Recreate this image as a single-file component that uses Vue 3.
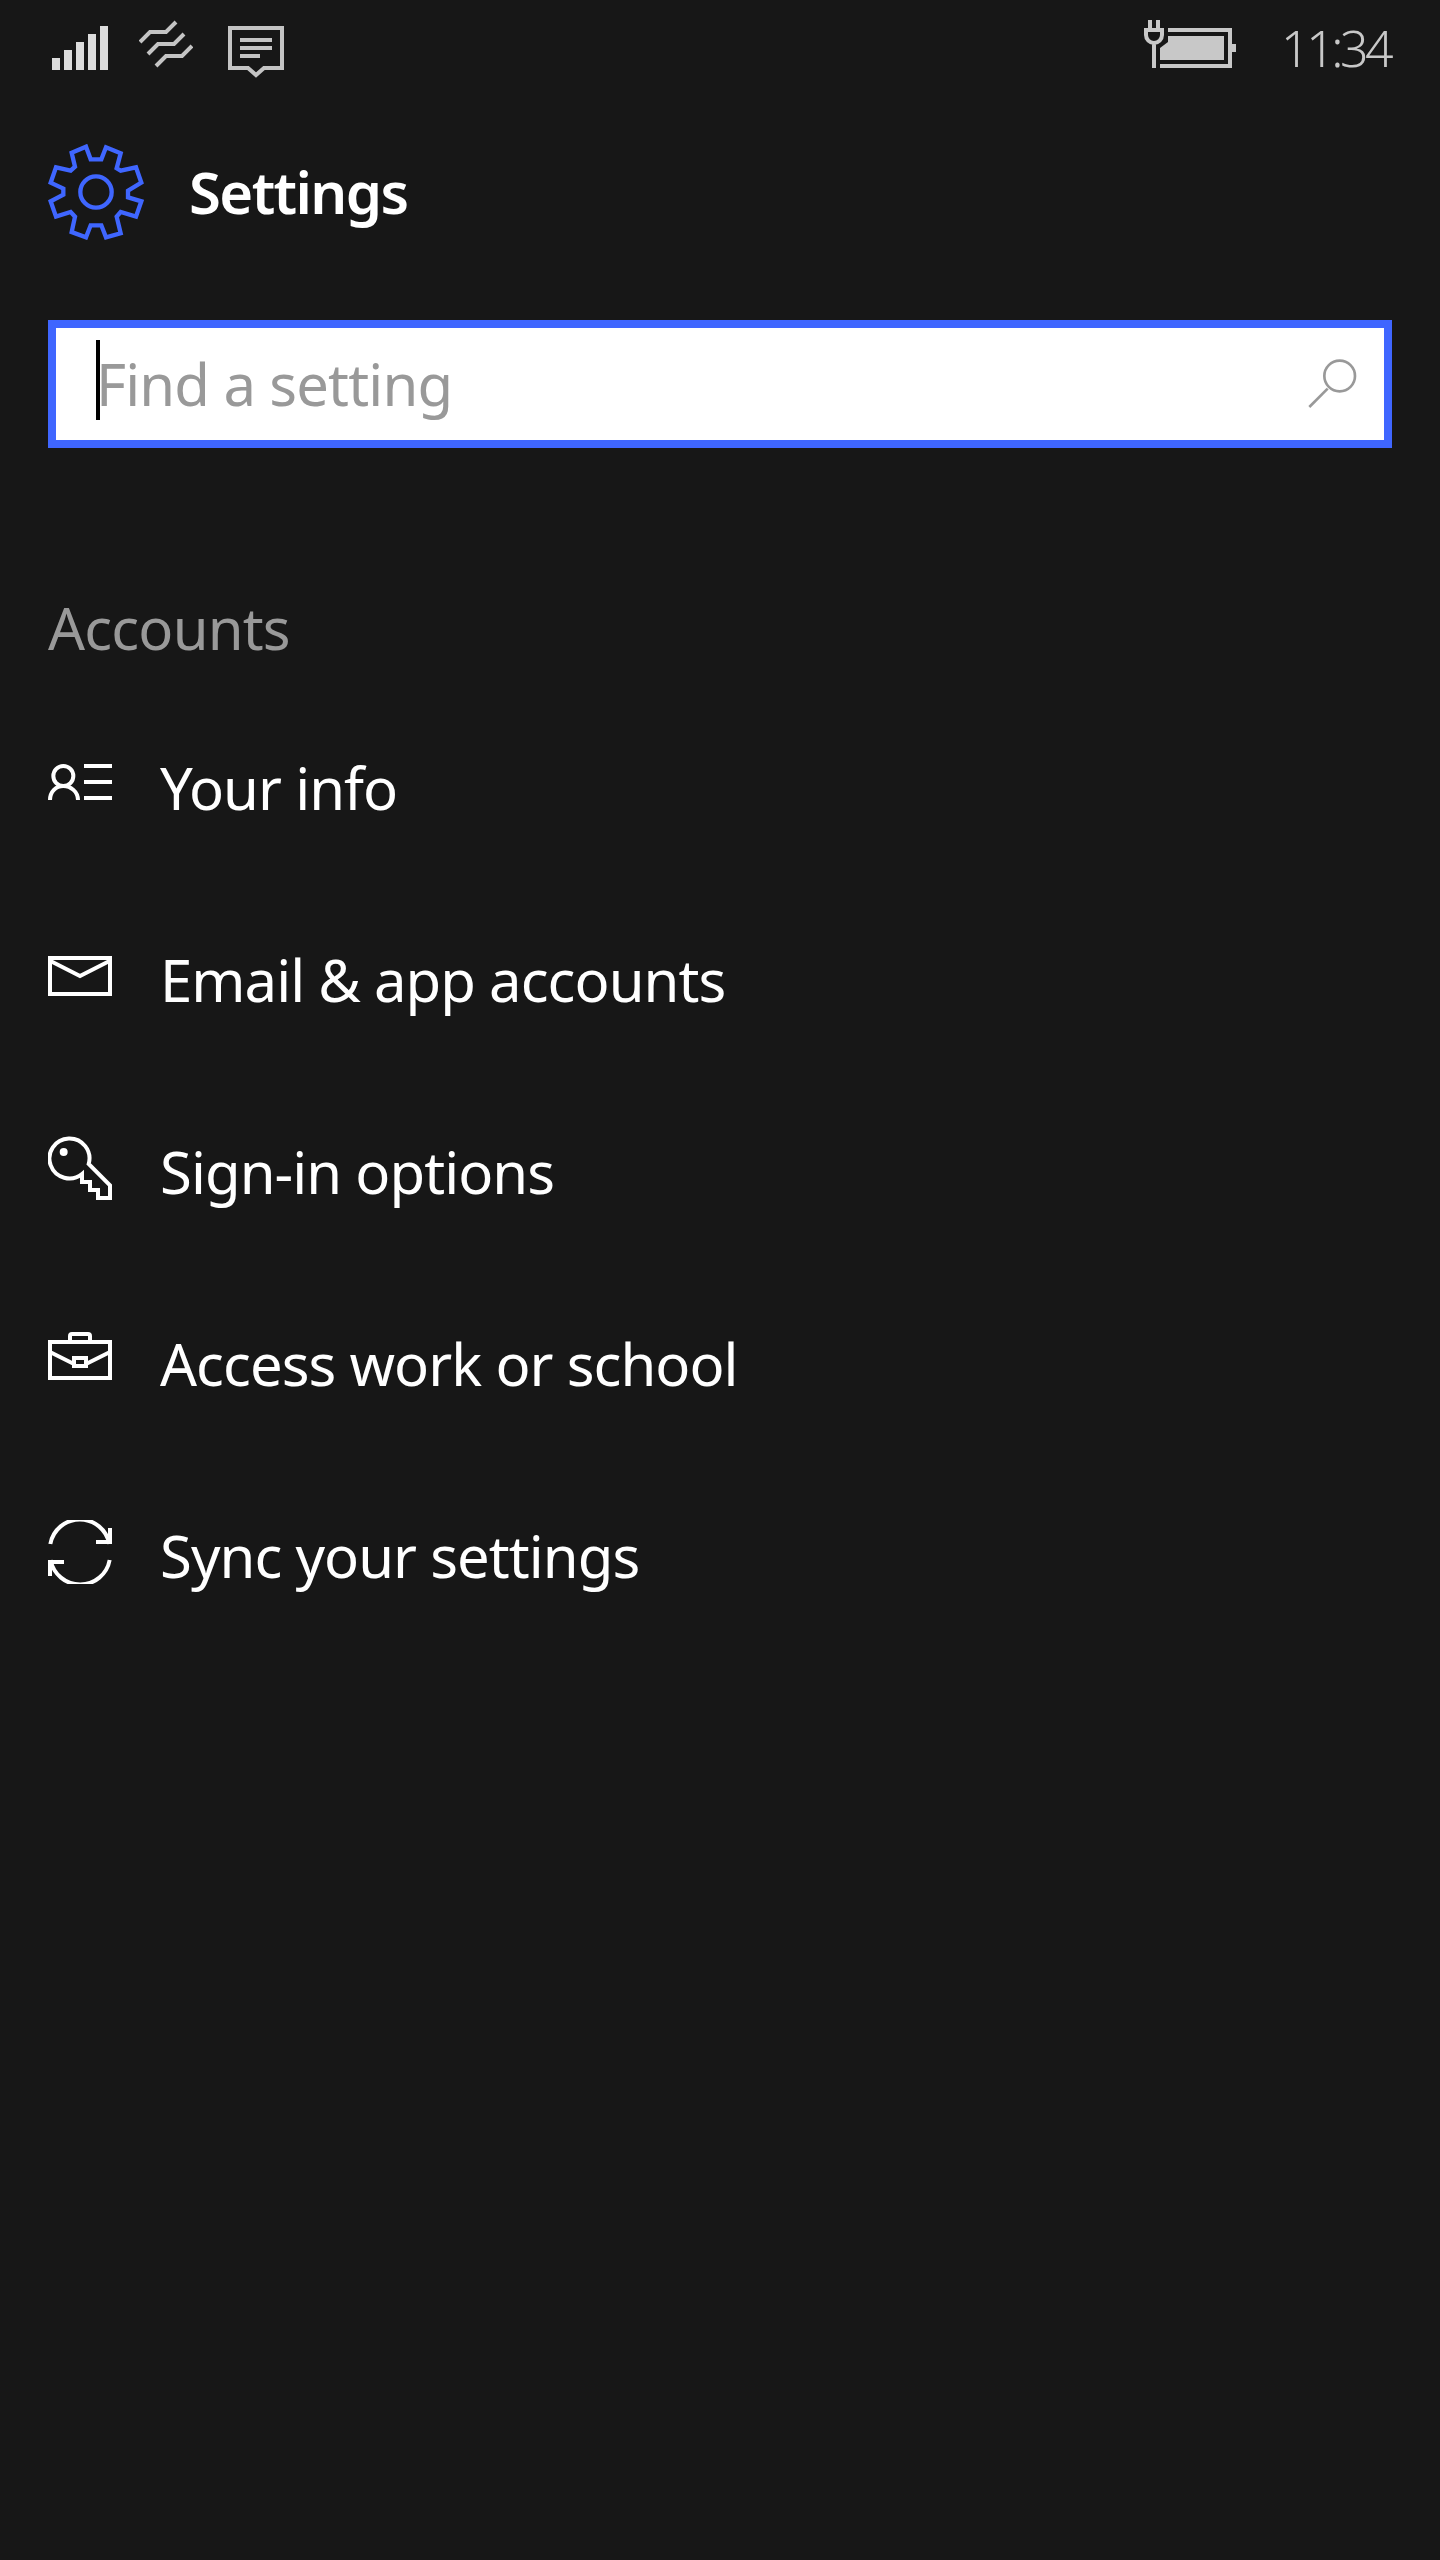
<script setup>
const rows = [
  { id: 'info', label: 'Your info', box: '54 36 192 192' },
  { id: 'mail', label: 'Email & app accounts', box: '54 612 192 192' },
  { id: 'key', label: 'Sign-in options', box: '54 48 192 192' },
  { id: 'work', label: 'Access work or school', box: '54 624 192 192' },
  { id: 'sync', label: 'Sync your settings', box: '54 1200 192 192' }
]

const bars = [12, 20, 28, 36, 44]
</script>

<template>
  <div class="page">
    <!-- Status bar -->
    <div class="status">
      <div class="status-left">
        <div class="signal">
          <span v-for="h in bars" :key="h" class="bar" :style="{ height: h + 'px' }"></span>
        </div>
        <svg class="wave" viewBox="139 20 54 48" width="54" height="48">
          <path d="M140 42 L150 32 H166 L176 22 M148 54 L158 44 H174 L184 34 M156 66 L166 56 H182 L192 46" />
        </svg>
        <svg class="msg" viewBox="228 26 56 52" width="56" height="52">
          <path d="M230 28 H282 V68 H264 L256 75 L248 68 H230 Z" />
          <path d="M240 40 H272 M240 48 H272 M240 56 H260" />
        </svg>
      </div>
      <div class="status-right">
        <svg class="battery" viewBox="1140 16 100 56" width="100" height="56">
          <path class="line" d="M1150 20 V30 M1158 20 V30 M1144 30 H1164 M1146 30 V35 A8 8 0 0 0 1162 35 V30 M1154 44 V68" />
          <path class="line" d="M1168 30 H1230 V66 H1160" />
          <path class="solid" d="M1168 36 H1224 V60 H1160 V48 L1168 42 Z" />
          <rect class="solid" x="1232" y="44" width="4" height="8" />
        </svg>
        <span class="time">11:34</span>
      </div>
    </div>

    <!-- Header -->
    <div class="header">
      <svg viewBox="144 432 288 288" width="96" height="96" class="gear">
        <path d="M272 478 H304 L318 442 L362 460 L350 505 L362 512 L408 502 L424 548 L384 572 V592 L424 604 L408 650 L362 636 L350 650 L362 700 L318 712 L304 676 H272 L258 712 L215 696 L225 650 L212 636 L168 650 L152 604 L190 584 V566 L152 548 L168 502 L212 512 L225 500 L215 458 L258 440 Z" />
        <circle cx="288" cy="576" r="47" />
      </svg>
      <h1 class="title">Settings</h1>
    </div>

    <!-- Search -->
    <div class="search">
      <span class="caret"></span>
      <span class="placeholder">Find a setting</span>
      <svg class="search-icon" viewBox="320 144 156 156" width="52" height="52">
        <circle cx="418" cy="198" r="46" />
        <path d="M382 236 L327 291" />
      </svg>
    </div>

    <!-- Accounts -->
    <div class="section">Accounts</div>
    <div class="list">
      <div v-for="row in rows" :key="row.id" class="row">
        <svg class="row-icon" :viewBox="row.box" width="64" height="64">
          <template v-if="row.id === 'info'">
            <circle cx="100" cy="108" r="30" />
            <path d="M60 180 C60 155 78 138 100 138 C122 138 144 155 144 180" />
            <path d="M162 78 H246 M162 126 H246 M162 174 H246" />
          </template>
          <template v-else-if="row.id === 'mail'">
            <rect x="60" y="654" width="180" height="108" />
            <path d="M60 662 L150 708 L240 662" />
          </template>
          <template v-else-if="row.id === 'key'">
            <path d="M156 162 A60 60 0 1 1 176 132 L240 196 V234 H204 V210 H180 V186 H156 Z" />
            <circle class="dot" cx="101" cy="96" r="12" />
          </template>
          <template v-else-if="row.id === 'work'">
            <rect x="60" y="666" width="180" height="108" />
            <path d="M120 664 V648 Q120 642 126 642 H174 Q180 642 180 648 V664" />
            <path d="M60 696 L132 732 M168 732 L240 696" />
            <rect x="132" y="714" width="36" height="24" />
          </template>
          <template v-else>
            <path d="M61 1272 A90 90 0 0 1 238 1272 M198 1266 H240 V1224" />
            <path d="M239 1320 A90 90 0 0 1 62 1320 M102 1326 H60 V1368" />
          </template>
        </svg>
        <span class="row-label">{{ row.label }}</span>
      </div>
    </div>
  </div>
</template>

<style>
html, body {
  background: #171717;
}
</style>

<style scoped>
.page {
  height: 2560px;
  background: #171717;
  color: #fff;
  font-family: "Noto Sans", "Open Sans", sans-serif;
  padding: 0 48px;
  box-sizing: border-box;
  overflow: hidden;
}

/* Status bar */
.status {
  height: 96px;
  display: flex;
  justify-content: space-between;
  align-items: flex-start;
}

.status-left {
  display: flex;
  align-items: flex-start;
  padding-left: 4px;
  padding-top: 20px;
}

.signal {
  display: flex;
  align-items: flex-end;
  gap: 4px;
  height: 50px;
}

.bar {
  width: 8px;
  background: #dcdcdc;
}

.wave {
  margin-left: 31px;
  fill: none;
  stroke: #c4c4c4;
  stroke-width: 4;
}

.msg {
  margin-left: 35px;
  margin-top: 6px;
  fill: none;
  stroke: #c4c4c4;
  stroke-width: 4;
}

.status-right {
  display: flex;
  align-items: flex-start;
  padding-top: 16px;
}

.battery .line {
  fill: none;
  stroke: #c8c8c8;
  stroke-width: 4;
}

.battery .solid {
  fill: #c8c8c8;
}

.time {
  margin-left: 41px;
  margin-right: 2px;
  font-size: 50px;
  font-weight: 300;
  line-height: 64px;
  color: #c8c8c8;
  letter-spacing: -3.5px;
}

/* Header */
.header {
  margin-top: 48px;
  height: 96px;
  display: flex;
  align-items: center;
  gap: 45px;
}

.gear {
  fill: none;
  stroke: #3f66ff;
  stroke-width: 13;
}

.title {
  margin: 0;
  font-size: 58px;
  font-weight: 600;
  line-height: 96px;
  letter-spacing: -1.6px;
}

/* Search */
.search {
  margin-top: 80px;
  height: 128px;
  box-sizing: border-box;
  border: 8px solid #3f66ff;
  background: #fff;
  padding: 12px 25px 0 40px;
  display: flex;
  align-items: center;
}

.caret {
  align-self: flex-start;
  width: 4px;
  height: 80px;
  background: #000;
}

.placeholder {
  flex: 1;
  margin-left: -4px;
  margin-top: -12px;
  font-size: 58px;
  line-height: 80px;
  color: #999;
  letter-spacing: -0.85px;
}

.search-icon {
  margin-top: -12px;
  fill: none;
  stroke: #999;
  stroke-width: 8;
}

/* Accounts */
.section {
  margin-top: 148px;
  height: 64px;
  font-size: 58px;
  line-height: 64px;
  color: #999;
  letter-spacing: -0.8px;
}

.list {
  margin-top: 92px;
  display: flex;
  flex-direction: column;
  gap: 128px;
}

.row {
  height: 64px;
  display: flex;
  align-items: flex-start;
  gap: 48px;
}

.row-icon {
  flex: none;
  fill: none;
  stroke: #fff;
  stroke-width: 12;
}

.row-icon .dot {
  fill: #fff;
  stroke: none;
}

.row-label {
  font-size: 58px;
  line-height: 64px;
  padding-top: 4px;
  letter-spacing: -0.95px;
  white-space: nowrap;
}
</style>
